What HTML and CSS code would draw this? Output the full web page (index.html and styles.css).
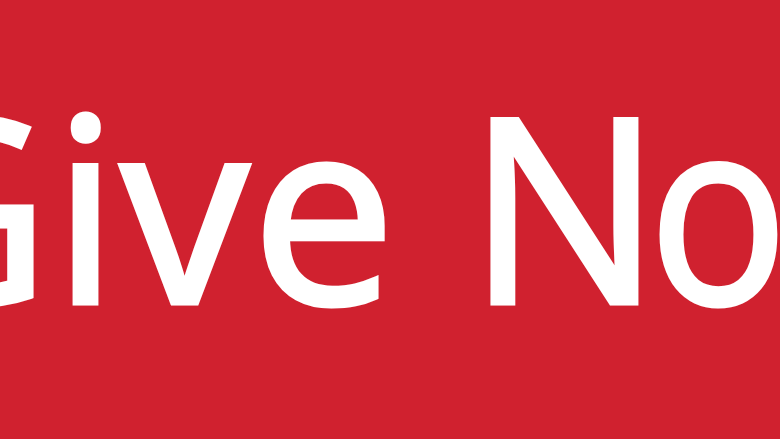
FILE: index.html
```html
<!DOCTYPE html>
<html>
<head>
<meta charset="utf-8">
<link rel="stylesheet" href="styles.css">
</head>
<body>
<div class="button">
  <span class="label">Give <span class="kern">N</span><span class="tail">ow</span></span>
</div>
</body>
</html>
```
FILE: styles.css
```css
html, body {
  margin: 0;
  padding: 0;
  width: 780px;
  height: 439px;
  overflow: hidden;
  background: #d0212f;
}
.button {
  width: 780px;
  height: 439px;
  background: #d0212f;
  overflow: hidden;
  display: flex;
  align-items: flex-start;
  padding-top: 29px;
  box-sizing: border-box;
}
.label {
  font-family: "Open Sans", sans-serif;
  font-size: 256px;
  line-height: normal;
  color: #ffffff;
  -webkit-text-stroke: 5px #ffffff;
  white-space: nowrap;
  margin-left: -136px;
  letter-spacing: 3px;
  word-spacing: 0px;
  flex-shrink: 0;
}
.kern {
  letter-spacing: -12px;
}
.tail {
  display: inline-block;
  transform: scaleX(0.9);
  transform-origin: left center;
}
```
